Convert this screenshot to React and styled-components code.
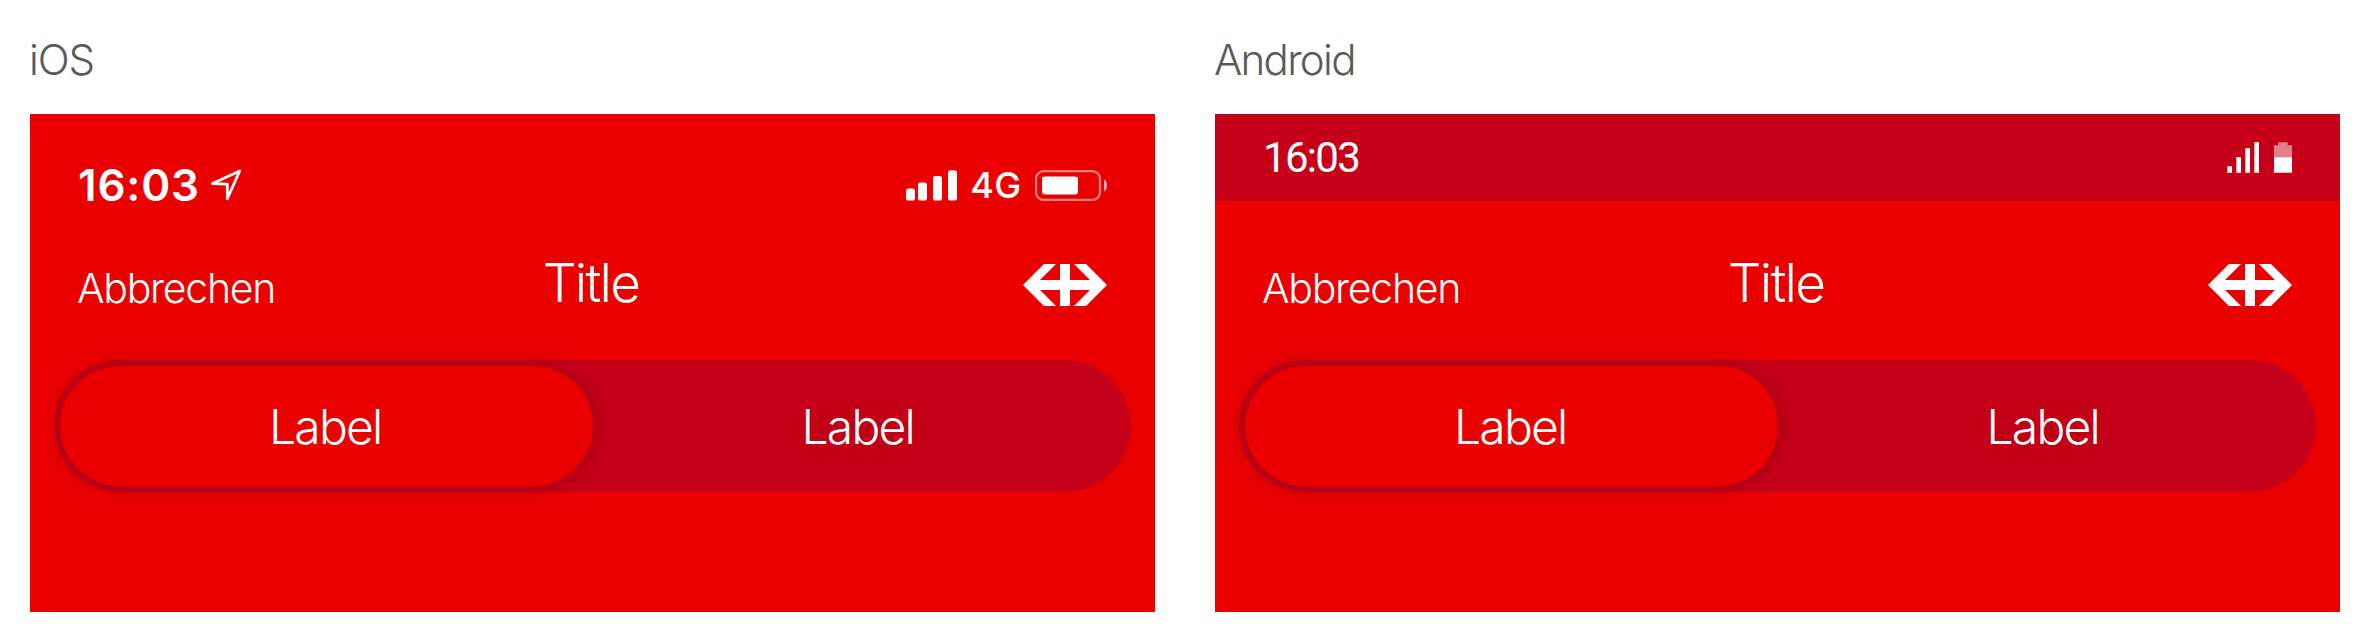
import React from 'react';
import styled, { createGlobalStyle } from 'styled-components';

const GlobalStyle = createGlobalStyle`
  *, *::before, *::after { box-sizing: border-box; }
  body {
    margin: 0;
    background: #fff;
    font-family: Inter, 'Liberation Sans', sans-serif;
    font-weight: 300;
  }
`;

const Page = styled.main`
  display: grid;
  grid-template-columns: 1fr 1fr;
  column-gap: 60px;
  padding: 36px 30px 30px;
`;

const Platform = styled.section`
  display: flex;
  flex-direction: column;
  gap: 30px;
`;

const PlatformName = styled.h2`
  margin: 0 0 0 -1px;
  color: #5a5a5a;
  font-size: 42px;
  font-weight: 300;
  line-height: 48px;
  letter-spacing: ${(p) => p.$tracking};
`;

const Screen = styled.div`
  height: 498px;
  background: #eb0000;
  color: #fff;
`;

const StatusBar = styled.div`
  display: flex;
  align-items: center;
  justify-content: space-between;
  height: ${(p) => (p.$android ? '87px' : '142px')};
  margin-bottom: ${(p) => (p.$android ? '55px' : '0')};
  padding: 0 48px;
  background: ${(p) => (p.$android ? '#c60018' : 'transparent')};
`;

const StatusGroup = styled.div`
  display: flex;
  align-items: center;
  gap: ${(p) => p.$gap};
`;

const IosTime = styled.span`
  font-size: 44px;
  font-weight: 600;
  line-height: 48px;
  letter-spacing: 0.8px;
`;

const AndroidTime = styled.span`
  font-family: Roboto, sans-serif;
  font-size: 42px;
  font-weight: 400;
  line-height: 48px;
  letter-spacing: -1.7px;
`;

const Network = styled.span`
  font-size: 36px;
  font-weight: 500;
  line-height: 40px;
  letter-spacing: 0.3px;
`;

const Icon = styled.svg`
  display: block;
  flex: none;
`;

const NavBar = styled.header`
  display: grid;
  grid-template-columns: 1fr auto 1fr;
  grid-template-rows: 58px;
  align-items: center;
  padding: 0 48px 0 47px;
`;

const CancelButton = styled.button`
  justify-self: start;
  margin: 0;
  padding: 6px 0 0;
  border: 0;
  background: none;
  color: inherit;
  font: inherit;
  font-size: 41px;
  line-height: 48px;
  letter-spacing: -1.3px;
`;

const NavTitle = styled.h1`
  margin: 0;
  padding: 0 2px 3px 0;
  font-size: 53px;
  font-weight: 300;
  line-height: 53px;
  letter-spacing: -1.7px;
`;

const LogoSlot = styled.div`
  justify-self: end;
`;

const Track = styled.div`
  display: grid;
  grid-template-columns: 1fr 1fr;
  height: 132px;
  margin: 46px 24px 0;
  padding: 6px;
  border-radius: 66px;
  background: #c60018;
`;

const Segment = styled.button`
  margin: 0;
  padding: 2px 2px 0 0;
  border: 0;
  border-radius: 60px;
  background: ${(p) => (p.$active ? '#eb0000' : 'transparent')};
  box-shadow: ${(p) => (p.$active ? '0 0 24px rgba(0, 0, 0, 0.2)' : 'none')};
  color: inherit;
  font: inherit;
  font-size: 48px;
  line-height: 60px;
  letter-spacing: -1.8px;
  text-shadow: ${(p) => (p.$active ? 'none' : '0 0 36px rgba(0, 0, 0, 0.2)')};
`;

function LocationIcon() {
  return (
    <Icon width="32" height="32" viewBox="0 0 32 32">
      <path
        d="M29.7 2 17.3 29.8V15.1L2.5 14.6Z"
        fill="none"
        stroke="#fff"
        strokeWidth="2.8"
        strokeLinejoin="round"
      />
    </Icon>
  );
}

function IosSignal() {
  return (
    <Icon width="51" height="31" viewBox="0 0 51 31" fill="#fff">
      <rect x="0" y="18.5" width="9" height="12" rx="2.6" />
      <rect x="12" y="12.5" width="9" height="18" rx="2.6" />
      <rect x="27" y="6" width="9" height="24.5" rx="2.6" />
      <rect x="42" y="0.3" width="9" height="30.2" rx="2.6" />
    </Icon>
  );
}

function IosBattery() {
  return (
    <Icon width="72" height="31" viewBox="0 0 72 31" fill="#fff">
      <rect x="1" y="1.2" width="64" height="28.6" rx="7.5" fill="none" stroke="#fff" strokeOpacity="0.5" strokeWidth="2.2" />
      <rect x="7" y="6.5" width="36" height="18" rx="3" />
      <path d="M69 9.5c4 2 4 10 0 12Z" fillOpacity="0.7" />
    </Icon>
  );
}

function AndroidSignal() {
  return (
    <Icon width="32" height="31" viewBox="0 0 32 31" fill="#fff">
      <rect x="0.3" y="24.3" width="4.7" height="6.5" />
      <rect x="9.3" y="15.2" width="4.7" height="15.6" />
      <rect x="18.3" y="6.2" width="4.7" height="24.6" />
      <rect x="27.3" y="0.2" width="4.7" height="30.6" />
    </Icon>
  );
}

function AndroidBattery() {
  return (
    <Icon width="18" height="31" viewBox="0 0 18 31" fill="#fff">
      <path d="M4.3 0.3h9.4v3H18V15.2H0V3.3h4.3Z" fillOpacity="0.5" />
      <rect y="15.2" width="18" height="15.5" />
    </Icon>
  );
}

function Logo() {
  return (
    <Icon width="84" height="42" viewBox="0 0 84 42" fill="#fff">
      <path d="M21 0H33L17 16H37V0H47V16H67L51 0H63L84 21 63 42H51L67 26H47V42H37V26H17L33 42H21L0 21Z" />
    </Icon>
  );
}

function Content() {
  return (
    <>
      <NavBar>
        <CancelButton>Abbrechen</CancelButton>
        <NavTitle>Title</NavTitle>
        <LogoSlot>
          <Logo />
        </LogoSlot>
      </NavBar>
      <Track>
        <Segment $active>Label</Segment>
        <Segment>Label</Segment>
      </Track>
    </>
  );
}

export default function App() {
  return (
    <>
      <GlobalStyle />
      <Page>
        <Platform>
          <PlatformName $tracking="-1.1px">iOS</PlatformName>
          <Screen>
            <StatusBar>
              <StatusGroup $gap="10px">
                <IosTime>16:03</IosTime>
                <LocationIcon />
              </StatusGroup>
              <StatusGroup $gap="13.5px">
                <IosSignal />
                <Network>4G</Network>
                <IosBattery />
              </StatusGroup>
            </StatusBar>
            <Content />
          </Screen>
        </Platform>
        <Platform>
          <PlatformName $tracking="-1.7px">Android</PlatformName>
          <Screen>
            <StatusBar $android>
              <AndroidTime>16:03</AndroidTime>
              <StatusGroup $gap="15px">
                <AndroidSignal />
                <AndroidBattery />
              </StatusGroup>
            </StatusBar>
            <Content />
          </Screen>
        </Platform>
      </Page>
    </>
  );
}
